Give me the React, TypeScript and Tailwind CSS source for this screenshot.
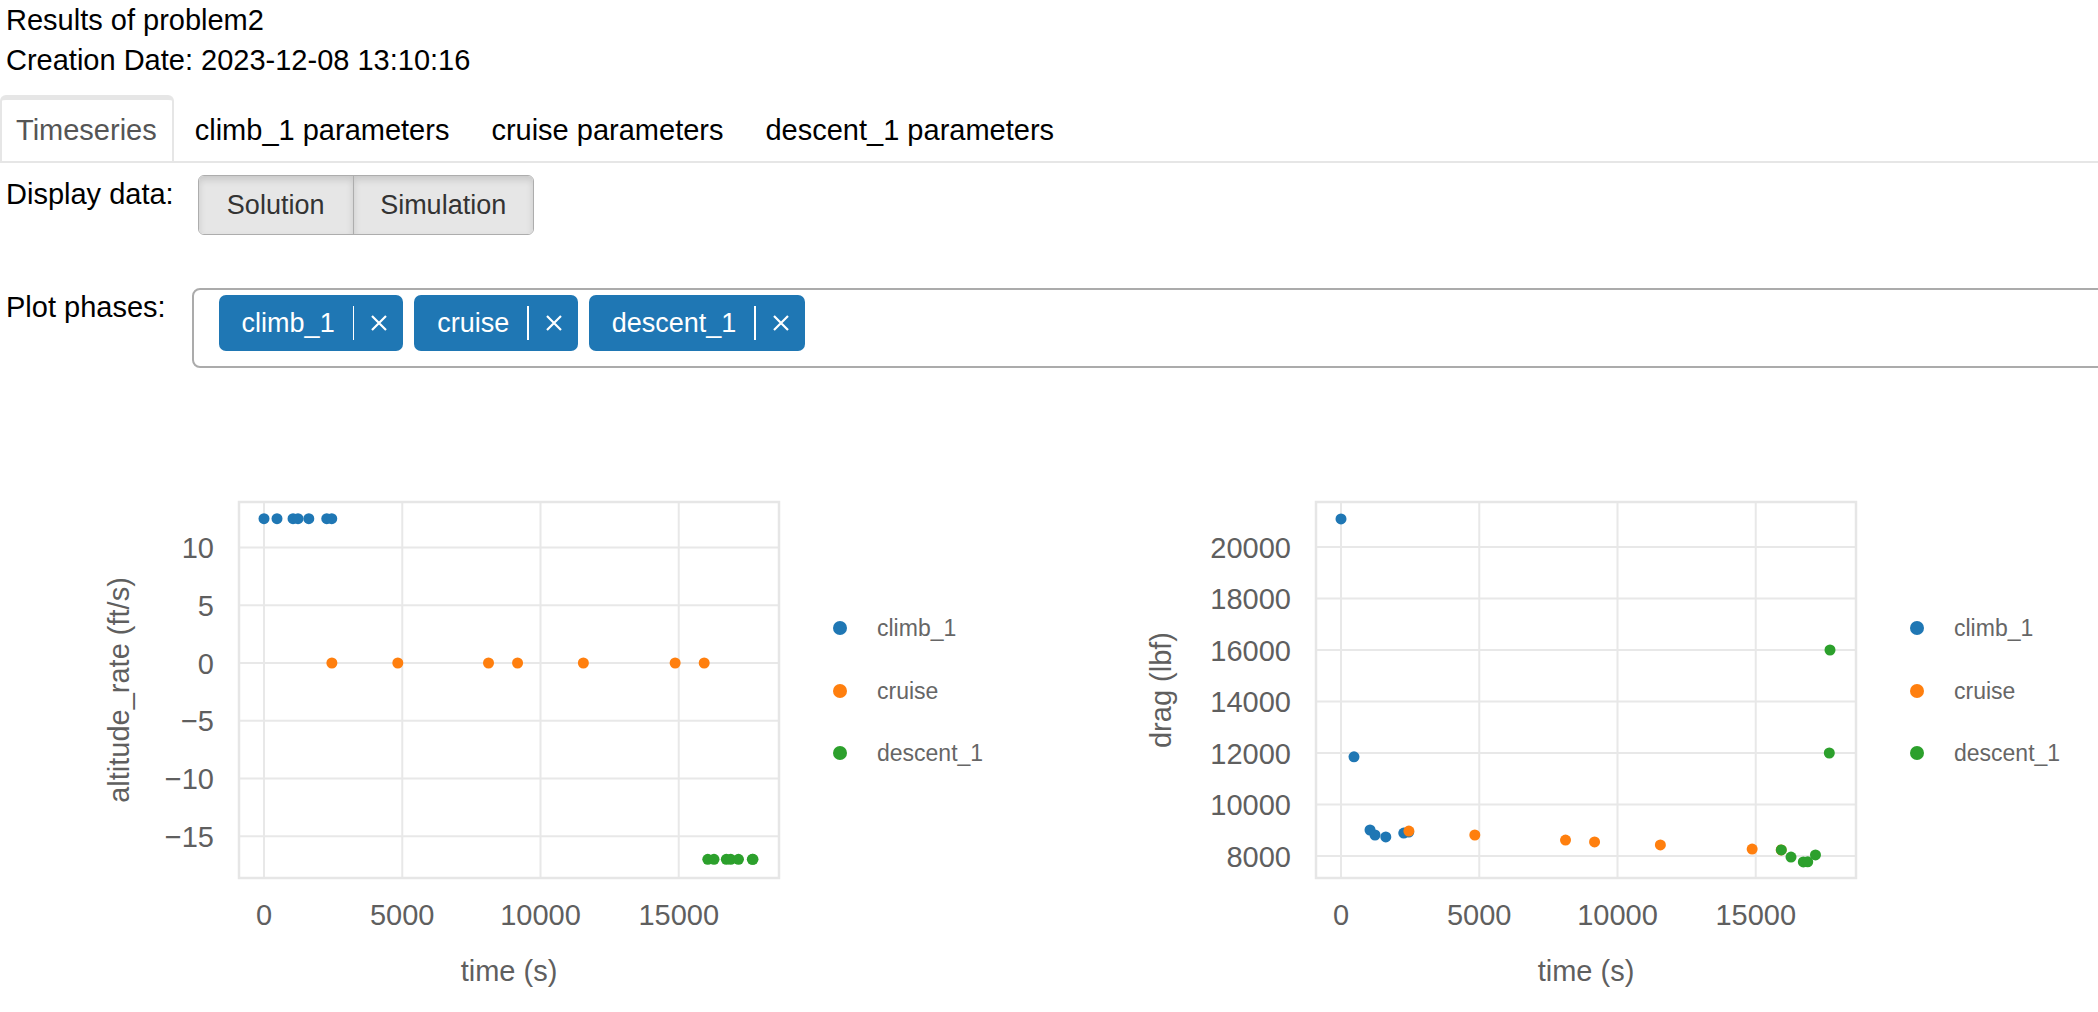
import React from "react";

const BLUE = "#1f77b4";
const ORANGE = "#ff7f0e";
const GREEN = "#2ca02c";

// plot frame, in chart-local pixels
const F = { l: 239, r: 779, t: 62, b: 438 };
const xPx = (t: number) => 264 + t * 0.02765;
const xTicks = [0, 5000, 10000, 15000];

const climbT = [0, 470, 1050, 1230, 1620, 2270, 2450];
const cruiseT = [2455, 4840, 8120, 9170, 11550, 14870, 15920];
const descentT = [16050, 16275, 16720, 16880, 17160, 17660, 17685];

type Pt = [number, number];
interface Series {
  name: string;
  color: string;
  pts: Pt[];
}

const zip = (ts: number[], vs: number[]): Pt[] => ts.map((t, i) => [t, vs[i]]);

const altSeries: Series[] = [
  { name: "climb_1", color: BLUE, pts: zip(climbT, climbT.map(() => 12.5)) },
  { name: "cruise", color: ORANGE, pts: zip(cruiseT, cruiseT.map(() => 0)) },
  { name: "descent_1", color: GREEN, pts: zip(descentT, descentT.map(() => -17)) },
];

// last cruise point sits under the first descent point
const dragSeries: Series[] = [
  { name: "climb_1", color: BLUE, pts: zip(climbT, [21090, 11850, 9010, 8815, 8740, 8890, 8930]) },
  { name: "cruise", color: ORANGE, pts: zip(cruiseT, [8970, 8815, 8620, 8545, 8430, 8270, 8235]) },
  {
    name: "descent_1",
    color: GREEN,
    pts: zip([15925, 16275, 16720, 16880, 17160, 17660, 17685], [8235, 7960, 7770, 7775, 8040, 12000, 16000]),
  },
];

const altY = (v: number) => 223 - v * 11.55;
const dragY = (v: number) => 107 + (20000 - v) * 0.02575;

interface ChartProps {
  width: number;
  yPx: (v: number) => number;
  yTicks: { v: number; label: string }[];
  yLabel: string;
  yLabelX: number;
  series: Series[];
}

function Chart({ width, yPx, yTicks, yLabel, yLabelX, series }: ChartProps) {
  const legendY = [188, 251, 313];
  return (
    <svg
      width={width}
      height={572}
      className="shrink-0 font-['Liberation_Sans',Arial,sans-serif]"
    >
      {xTicks.map((t) => (
        <line key={t} x1={xPx(t)} x2={xPx(t)} y1={F.t} y2={F.b} stroke="#e8e8e8" strokeWidth={2} />
      ))}
      {yTicks.map((tk) => (
        <line key={tk.label} x1={F.l} x2={F.r} y1={yPx(tk.v)} y2={yPx(tk.v)} stroke="#e8e8e8" strokeWidth={2} />
      ))}
      <rect
        x={F.l}
        y={F.t}
        width={F.r - F.l}
        height={F.b - F.t}
        fill="none"
        stroke="#e6e6e6"
        strokeWidth={2.5}
      />
      {series.map((s) =>
        s.pts.map(([t, v], i) => (
          <circle key={s.name + i} cx={xPx(t)} cy={yPx(v)} r={5.5} fill={s.color} />
        ))
      )}
      {yTicks.map((tk) => (
        <text key={tk.label} x={214} y={yPx(tk.v) + 10.5} textAnchor="end" fontSize={29} fill="#5f5f5f">
          {tk.label}
        </text>
      ))}
      {xTicks.map((t) => (
        <text key={t} x={xPx(t)} y={485} textAnchor="middle" fontSize={29} fill="#5f5f5f">
          {t}
        </text>
      ))}
      <text x={(F.l + F.r) / 2} y={541} textAnchor="middle" fontSize={29} fill="#5f5f5f">
        time (s)
      </text>
      <text
        x={yLabelX}
        y={250}
        transform={`rotate(-90 ${yLabelX} 250)`}
        textAnchor="middle"
        fontSize={29}
        fill="#5f5f5f"
      >
        {yLabel}
      </text>
      {series.map((s, i) => (
        <g key={s.name}>
          <circle cx={F.r + 61} cy={legendY[i]} r={7} fill={s.color} />
          <text x={F.r + 98} y={legendY[i] + 8} fontSize={23} fill="#666666">
            {s.name}
          </text>
        </g>
      ))}
    </svg>
  );
}

function Chip({ label }: { label: string }) {
  return (
    <div className="flex h-[56px] items-center rounded-[7px] bg-[#1f77b4] pl-[23px] pr-[15px] text-[27px] text-white">
      <span className="whitespace-nowrap">{label}</span>
      <span className="ml-[18px] h-[34px] w-[1.5px] bg-white" />
      <svg width="18" height="16" viewBox="0 0 18 16" className="ml-[16px]">
        <path d="M2 1 L16 15 M16 1 L2 15" stroke="white" strokeWidth="2.2" />
      </svg>
    </div>
  );
}

export default function App() {
  const tabs = ["climb_1 parameters", "cruise parameters", "descent_1 parameters"];
  return (
    <div className="h-screen w-full overflow-hidden bg-white font-['Liberation_Sans',Arial,sans-serif] text-black">
      <div className="pl-[6px] text-[29px] leading-[40px]">
        <div>Results of problem2</div>
        <div>Creation Date: 2023-12-08 13:10:16</div>
      </div>

      <div className="mt-[15px] flex border-b-2 border-[#e6e6e6] text-[29px] leading-[40px]">
        <div className="rounded-t-[6px] border-x-2 border-t-[5px] border-[#e6e6e6] pb-[11px] pl-[14px] pr-[15px] pt-[10px] text-[#555]">
          Timeseries
        </div>
        {tabs.map((t) => (
          <div key={t} className="whitespace-nowrap px-[21px] pb-[11px] pt-[15px]">
            {t}
          </div>
        ))}
      </div>

      <div className="mt-[12px] flex items-start">
        <div className="shrink-0 whitespace-nowrap pl-[6px] text-[29px] leading-[38px]">Display data:</div>
        <div className="ml-[24px] flex h-[60px] shrink-0 overflow-hidden rounded-[6px] border-[1.5px] border-[#adadad] text-[27px] text-[#333]">
          <div className="flex w-[154px] items-center justify-center bg-[#e6e6e6] shadow-[inset_0_4px_7px_rgba(0,0,0,0.13)]">
            Solution
          </div>
          <div className="flex w-[180px] items-center justify-center border-l-[1.5px] border-[#adadad] bg-[#e6e6e6] shadow-[inset_0_4px_7px_rgba(0,0,0,0.13)]">
            Simulation
          </div>
        </div>
      </div>

      <div className="mt-[53px] flex items-start">
        <div className="shrink-0 whitespace-nowrap pl-[6px] text-[29px] leading-[38px]">Plot phases:</div>
        <div className="ml-[26px] flex h-[80px] w-[1950px] shrink-0 items-start gap-[11px] rounded-[8px] border-2 border-[#ababab] pl-[25px] pt-[5px]">
          <Chip label="climb_1" />
          <Chip label="cruise" />
          <Chip label="descent_1" />
        </div>
      </div>

      <div className="mt-[72px] flex">
        <Chart
          width={1077}
          yPx={altY}
          yTicks={[10, 5, 0, -5, -10, -15].map((v) => ({
            v,
            label: v < 0 ? "\u2212" + Math.abs(v) : String(v),
          }))}
          yLabel="altitude_rate (ft/s)"
          yLabelX={129}
          series={altSeries}
        />
        <Chart
          width={1021}
          yPx={dragY}
          yTicks={[20000, 18000, 16000, 14000, 12000, 10000, 8000].map((v) => ({
            v,
            label: String(v),
          }))}
          yLabel="drag (lbf)"
          yLabelX={94}
          series={dragSeries}
        />
      </div>
    </div>
  );
}
